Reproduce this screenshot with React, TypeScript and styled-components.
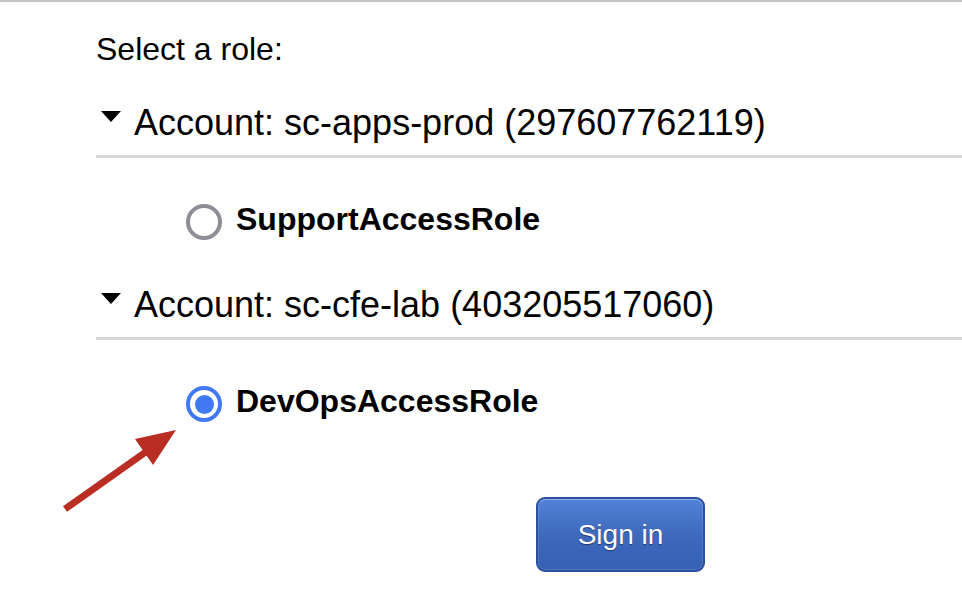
import React from "react";
import styled, { createGlobalStyle } from "styled-components";

const Global = createGlobalStyle`
  html, body { margin: 0; padding: 0; background: #ffffff; }
  body {
    font-family: "Liberation Sans", Arial, Helvetica, sans-serif;
    color: #000;
    width: 962px;
    height: 592px;
    overflow: hidden;
    border-top: 2px solid #c4c4c4;
    box-sizing: border-box;
  }
`;

const Page = styled.div`
  position: relative;
  padding-left: 96px;
  padding-top: 29px;
`;

const Title = styled.div`
  font-size: 32px;
  line-height: 36px;
  height: 36px;
`;

const Section = styled.div<{ $first?: boolean }>`
  display: flex;
  flex-direction: column;
  margin-top: ${(p) => (p.$first ? "36px" : "4px")};
`;

const Header = styled.div`
  display: flex;
  align-items: flex-start;
  font-size: 36px;
  line-height: 40px;
  height: 40px;
`;

const Caret = styled.span`
  width: 0;
  height: 0;
  margin: 8px 13px 0 5px;
  border-left: 10.5px solid transparent;
  border-right: 10.5px solid transparent;
  border-top: 11px solid #000;
`;

const Rule = styled.div`
  margin-top: 12px;
  height: 3px;
  background: #d8d8d8;
`;

const RoleRow = styled.label`
  display: flex;
  align-items: center;
  gap: 14px;
  margin: 46px 0 41px 90px;
  height: 36px;
  font-size: 32px;
  font-weight: bold;
`;

const RoleName = styled.span`
  margin-top: -6px;
`;

const Radio = styled.span<{ $checked?: boolean }>`
  box-sizing: border-box;
  width: 36px;
  height: 36px;
  border-radius: 50%;
  border: 4px solid ${(p) => (p.$checked ? "#4179f4" : "#8e8d95")};
  background: #fff;
  display: flex;
  align-items: center;
  justify-content: center;
  &::after {
    content: "";
    display: ${(p) => (p.$checked ? "block" : "none")};
    width: 19px;
    height: 19px;
    border-radius: 50%;
    background: #4179f4;
  }
`;

const ButtonRow = styled.div`
  margin-top: 34px;
  padding-left: 440px;
`;

const SignIn = styled.button`
  box-sizing: border-box;
  width: 169px;
  height: 75px;
  border-radius: 9px;
  border: 2px solid #2a50a0;
  background: linear-gradient(#5183d7, #3d67ba 55%, #3660b4);
  box-shadow: inset 0 1px 0 rgba(255, 255, 255, 0.3), inset 0 0 0 1px rgba(255, 255, 255, 0.12);
  color: #fff;
  font-family: "Liberation Sans", Arial, sans-serif;
  font-size: 28px;
  text-shadow: 0 1px 1px rgba(0, 0, 0, 0.45);
  padding: 0;
  cursor: pointer;
`;

const Arrow = styled.svg`
  position: absolute;
  left: 55px;
  top: 420px;
`;

const accounts = [
  { name: "Account: sc-apps-prod (297607762119)", role: "SupportAccessRole", checked: false },
  { name: "Account: sc-cfe-lab (403205517060)", role: "DevOpsAccessRole", checked: true },
];

export default function App() {
  return (
    <>
      <Global />
      <Page>
        <Title>Select a role:</Title>
        {accounts.map((a, i) => (
          <Section key={a.role} $first={i === 0}>
            <Header>
              <Caret />
              {a.name}
            </Header>
            <Rule />
            <RoleRow>
              <Radio $checked={a.checked} />
              <RoleName>{a.role}</RoleName>
            </RoleRow>
          </Section>
        ))}
        <ButtonRow>
          <SignIn>Sign in</SignIn>
        </ButtonRow>
        <Arrow width="130" height="95" viewBox="0 0 130 95">
          <line x1="10" y1="87" x2="95" y2="27" stroke="#b92d22" strokeWidth="7" />
          <polygon points="121,8 80,17 98,43" fill="#b92d22" />
        </Arrow>
      </Page>
    </>
  );
}
